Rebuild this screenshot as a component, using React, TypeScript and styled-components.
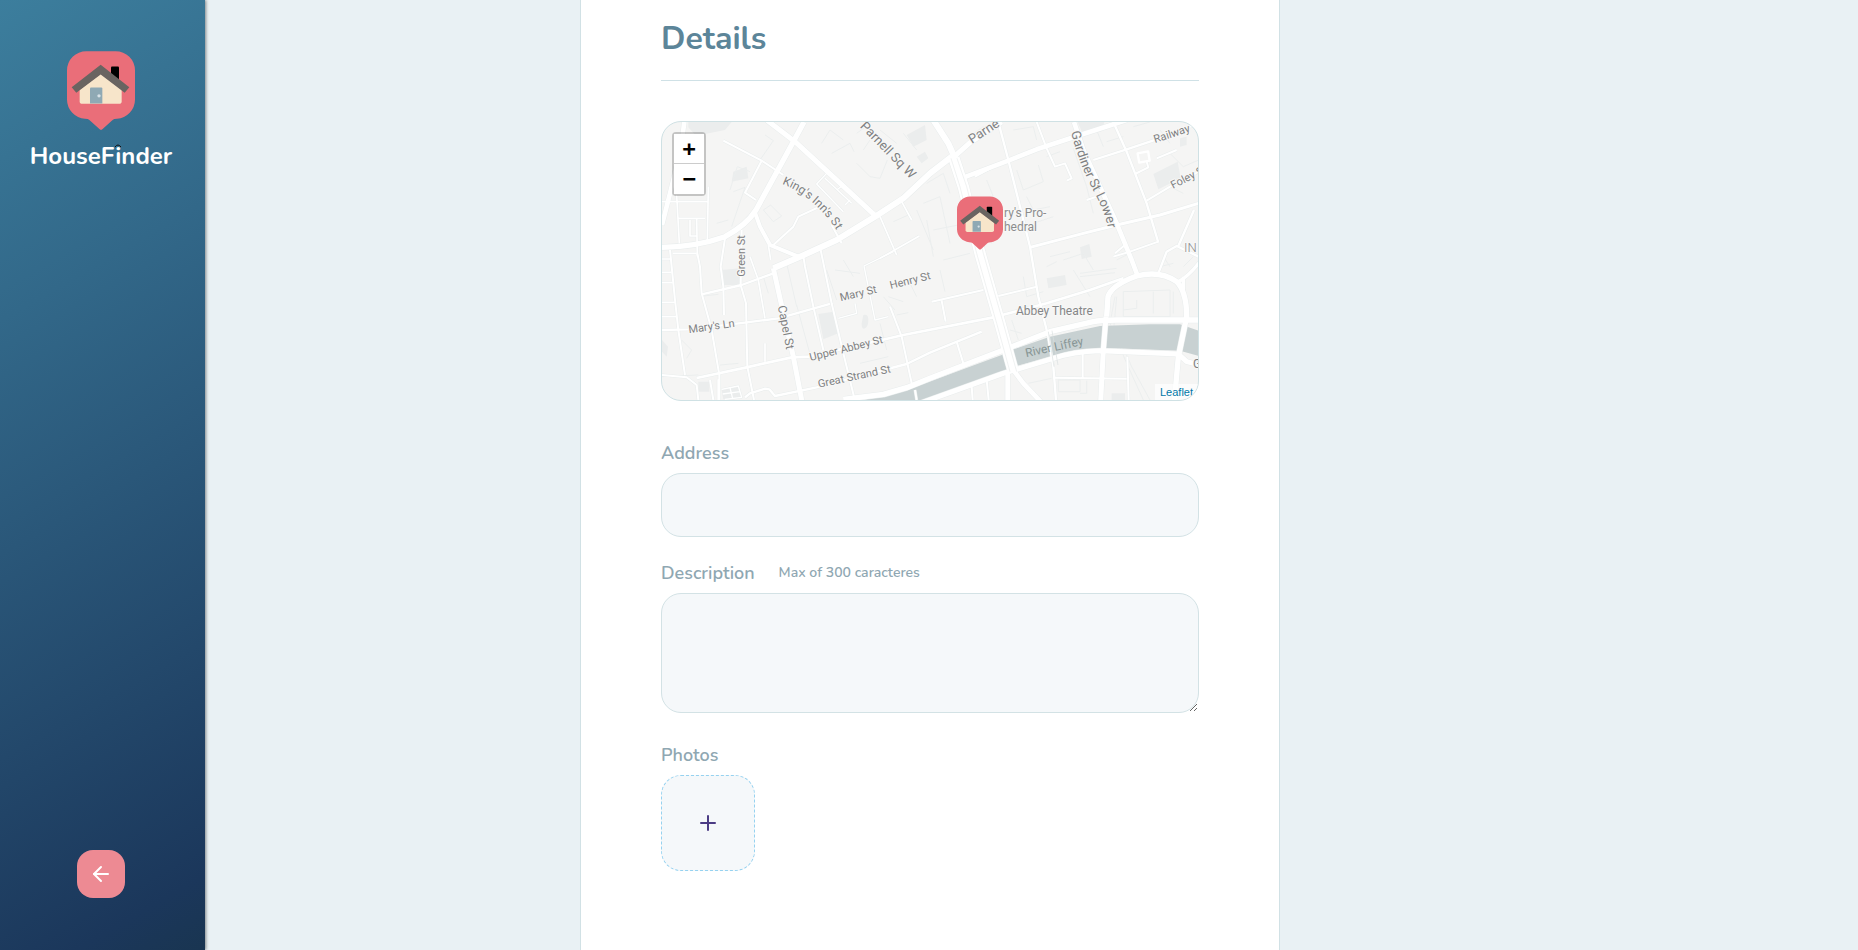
import React from "react";
import styled, { createGlobalStyle } from "styled-components";
import { ArrowLeft, Plus } from "lucide-react";

const GlobalStyle = createGlobalStyle`
  *, *::before, *::after { box-sizing: border-box; }
  body {
    margin: 0;
    background: #e9f1f4;
    font-family: Nunito, Lato, sans-serif;
    color: #8fa7b2;
  }
`;

const Page = styled.div`
  display: grid;
  grid-template-columns: 205px minmax(0, 1fr);
  min-height: 100vh;
`;

const Sidebar = styled.aside`
  display: flex;
  flex-direction: column;
  align-items: center;
  justify-content: space-between;
  padding: 51px 3px 52px 0;
  background: linear-gradient(150deg, #3c7e9d 0%, #326889 30%, #1b375b 93%, #193551 100%);
  box-shadow: 1px 0 3px rgba(0, 0, 0, 0.45);
`;

const Brand = styled.div`
  position: relative;
  display: flex;
  flex-direction: column;
  align-items: center;
  gap: 11px;
`;

const BrandName = styled.span`
  font-size: 24px;
  line-height: 30px;
  font-weight: 700;
  color: #fff;
`;

const Smoke = styled.svg`
  position: absolute;
  top: 93px;
  right: 51px;
`;

const BackButton = styled.button`
  display: grid;
  place-items: center;
  width: 48px;
  height: 48px;
  padding: 0;
  border: 0;
  border-radius: 16px;
  background: #ed8a93;
  color: #fff;
  cursor: pointer;
`;

const Main = styled.main`
  display: flex;
  justify-content: center;
  padding-right: 203px;
`;

const Form = styled.form`
  display: flex;
  flex-direction: column;
  width: 100%;
  max-width: 700px;
  padding: 20px 80px 79px;
  background: #fff;
  border: 1px solid #d1e1e5;
  border-width: 0 1px;
`;

const Title = styled.h2`
  margin: 0 0 40px;
  padding-bottom: 22px;
  border-bottom: 1px solid #cfe1e6;
  font-size: 32px;
  line-height: 38px;
  font-weight: 700;
  color: #5c8599;
`;

const MapFrame = styled.div`
  position: relative;
  height: 280px;
  margin-bottom: 40px;
  overflow: hidden;
  border: 1px solid #cfe1e4;
  border-radius: 20px;
  background: #f5f5f4;
`;

const MapCanvas = styled.svg`
  display: block;
  width: 100%;
  height: 100%;
`;

const ZoomControl = styled.div`
  position: absolute;
  top: 10px;
  left: 10px;
  display: flex;
  flex-direction: column;
  border: 2px solid rgba(0, 0, 0, 0.2);
  background-clip: padding-box;
  border-radius: 4px;
`;

const ZoomButton = styled.button`
  width: 30px;
  height: 30px;
  padding: 0;
  border: 0;
  background: #fff;
  color: #000;
  font: bold 22px/28px "DejaVu Sans Mono", monospace;
  cursor: pointer;

  &:first-child {
    border-bottom: 1px solid #ccc;
  }
`;

const Marker = styled.div`
  position: absolute;
  top: 74px;
  left: 295px;
  line-height: 0;
`;

const Attribution = styled.div`
  position: absolute;
  right: 0;
  bottom: 0;
  padding: 0 5px;
  background: rgba(255, 255, 255, 0.7);
  font: 11px/16px "Liberation Sans", sans-serif;

  a {
    color: #0078a8;
    text-decoration: none;
  }
`;

const Field = styled.div<{ $gap?: number }>`
  display: flex;
  flex-direction: column;
  gap: 8px;
  margin-bottom: ${(p) => p.$gap ?? 24}px;
`;

const Label = styled.label`
  display: flex;
  align-items: center;
  gap: 24px;
  font-size: 18px;
  line-height: 24px;
  font-weight: 600;
  color: #8fa7b2;
`;

const Hint = styled.span`
  font-size: 14px;
`;

const TextInput = styled.input`
  width: 100%;
  height: 64px;
  padding: 0 16px;
  border: 1px solid #d3e2e5;
  border-radius: 20px;
  outline: 0;
  background: #f5f8fa;
  color: #5c8599;
  font: inherit;
`;

const TextArea = styled.textarea`
  display: block;
  width: 100%;
  height: 120px;
  padding: 16px;
  border: 1px solid #d3e2e5;
  border-radius: 20px;
  outline: 0;
  resize: vertical;
  background: #f5f8fa;
  color: #5c8599;
  font: inherit;
`;

const PhotoButton = styled.button`
  display: grid;
  place-items: center;
  width: 94px;
  height: 96px;
  padding: 0;
  border: 1px dashed #96d2f0;
  border-radius: 20px;
  background: #f5f8fa;
  color: #4b3c84;
  cursor: pointer;
`;

function HousePin({ width, height }: { width: number; height: number }) {
  return (
    <svg width={width} height={height} viewBox="0 0 204 236" role="img" aria-label="House pin">
      <path
        d="M58 0h88a58 58 0 0 1 58 58v88a58 58 0 0 1-54 57q-10 0-14 4l-30 27q-4 3-8 0l-30-27q-4-4-14-4A58 58 0 0 1 0 146V58A58 58 0 0 1 58 0z"
        fill="#ea6e79"
      />
      <rect x="132" y="46" width="24" height="44" rx="3" fill="#000" />
      <path d="M101 68 164 116v34q0 8-8 8H46q-8 0-8-8v-34z" fill="#f7e5ca" />
      <path d="M69 112q0-3 3-3h31q3 0 3 3v45H69z" fill="#8fa9b4" />
      <circle cx="96" cy="134" r="5" fill="#d9e3e8" />
      <path d="M101 41 187 108 173 125 101 70 28 125 14 108z" fill="#696461" />
    </svg>
  );
}

type Road = [path: string, width: number];

const roads: Road[] = [
  ["M36 275H175M85 325H165M80 255 88 400M175 230 172 390M140 325 142 440M120 330V378H140", 5],
  ["M220 92 335 152 400 195M335 152 285 248 318 270M545 345 575 400", 6],
  ["M530 190 500 222 580 305M525 205 605 280M560 240 580 225M585 285 600 270", 4],
  ["M370 405 430 350 445 320 520 285", 6],
  ["M142 430 150 470 155 550 185 660 208 795V870", 6],
  ["M60 420 68 500 75 570 85 660 105 795", 6],
  ["M36 447H62M36 487H65M36 518H68M36 577H75M36 620H80M68 430H140", 5],
  ["M225 385 212 470 220 530 222 615", 6],
  ["M36 660 115 658 285 638 385 625 540 582", 7],
  ["M155 553 275 525 370 490", 7],
  ["M275 360 272 525 288 580 292 770 312 870", 6],
  ["M355 405 362 450M300 440 325 510 345 625M345 700V755", 5],
  ["M460 438 465 470 490 590 520 720", 6],
  ["M512 420 545 580 580 730 612 860", 6],
  ["M140 804 290 772 425 742 475 740 695 690 760 675 1030 622 1190 580 1320 540 1420 505", 8],
  ["M36 795 110 802 140 825 145 870M180 810 190 870M205 808V870", 6],
  ["M215 838 265 828 275 862 225 868M240 833 248 866M218 852 270 845", 4],
  ["M285 862 300 850 345 836 358 838 375 858 500 832 770 762 840 728 995 665", 7],
  ["M720 590 755 680 785 820M795 840 800 870", 6],
  ["M690 320 740 435M690 445 808 378M755 275 785 330", 5],
  ["M642 468 730 425M642 468 675 630 715 620M565 625 620 610 615 580", 4],
  ["M920 695 940 760M845 575 1000 540M875 572 887 635M1045 558 1160 530", 6],
  ["M975 200 1060 155M1160 36 1190 115 1215 170 1245 160 1265 205 1250 212", 6],
  ["M1045 36 1075 150 1140 410 1165 560 1195 680 1210 770 1218 870", 7],
  ["M1140 412 1300 370 1400 345 1530 315 1646 280", 9],
  ["M1390 36 1432 130 1490 280 1525 398", 7],
  ["M1330 150 1430 118 1520 88 1646 40", 7],
  ["M1490 272 1560 230 1646 185M1455 192 1495 172 1490 155M1310 270 1370 250M1520 145 1580 120", 6],
  ["M1525 395 1440 425 1390 440M1395 430 1425 405", 6],
  ["M1525 490 1550 425 1580 408 1646 440M1585 408 1632 300", 7],
  ["M1210 803 1430 806M1298 725V803M1432 740 1436 870M965 830 968 870M1010 810 1016 870", 6],
  ["M103 36 92 120 60 250 36 345", 14],
  ["M462 36 430 95 318 300Q290 345 225 380 140 410 36 412", 16],
  ["M350 30 435 95 675 316", 15],
  ["M370 475 455 438 560 390 675 320 760 265 840 190 905 140", 18],
  ["M315 308 330 350 360 405 445 440", 12],
  ["M370 475 400 610 430 740 456 875", 15],
  ["M850 30 895 100 915 145", 18],
  ["M910 142 960 98 1055 36", 15],
  ["M940 203 1075 152 1160 118 1300 72 1430 30", 14],
  ["M1272 36 1300 120 1400 340 1445 450 1462 495", 14],
  ["M1370 620 1374 560Q1385 525 1460 498 1530 480 1580 515 1610 545 1610 620L1585 740 1573 875", 16],
  ["M1585 515Q1615 500 1650 455M1600 560V500", 10],
  ["M1368 620 1360 720 1352 875", 15],
  ["M580 868 700 853 770 833 840 805 1055 722 1200 665 1330 635Q1350 630 1400 630H1650", 16],
  ["M810 880 1060 790 1210 745Q1270 724 1350 722L1585 732 1610 755 1650 765", 15],
  ["M1090 780 1120 820 1172 875M1073 780V875", 14],
  ["M912 145 940 230 990 430 1050 640 1090 785", 34],
];

const buildings = [
  "M115 36h130l-20 24-60 12-5 30-45-50z",
  "M770 75 825 45 830 90 790 110zM505 612 550 605 565 670 520 688z",
  "M1283 36h80l-8 28-55 12zM1510 192 1583 155 1592 205 1525 238z",
  "M1190 505 1245 495 1250 525 1195 535zM1290 412 1318 402 1325 440 1295 447z",
  "M215 480 270 475V525H215zM145 815H178V845H145zM215 840 265 830 275 860 220 868z",
  "M640 615q15-5 15 15t-10 25-10-15zM1385 850h40v20h-40zM800 140l25-15 10 20-20 15z",
  "M250 185 290 170 295 205 245 215zM1590 85l20-5v25l-20 5zM36 690l18 20-4 30-14-15z",
];

const outlines = [
  "M345 75 370 92 330 150M515 100 540 60 580 90M545 130 600 100 612 125M620 160 660 200 690 205 712 150",
  "M240 240 262 170 300 185M250 245 285 232 245 350M340 300 362 285 395 318 370 335zM200 340 235 330",
  "M690 60 740 100M760 70 800 120M620 70 650 48M640 120 660 90M730 335 775 315M800 300 850 420",
  "M410 460 440 590M440 585 482 740M530 480 560 570M580 450 610 500M555 480 630 490",
  "M700 560 735 600M780 520 800 560M715 560 760 575M740 615 775 608M690 640 710 720M630 760 715 740",
  "M95 690 125 720 110 745M210 765 265 760M340 500 355 550M36 800 145 795M160 558 205 553",
  "M1000 50 950 85M820 280 870 260 900 400M830 330 850 440M830 220 880 190 900 250M850 360 1000 330",
  "M1090 60 1150 50 1160 90M1100 180 1120 240 1180 215 1165 165M1190 140 1230 125M1270 115 1310 230 1330 310",
  "M1130 260 1150 300 1200 290M1150 340 1210 320M1240 450 1300 430 1330 480M1200 440 1260 425",
  "M1000 300 1025 400M1010 210 1030 260M1080 660 1115 670M1085 630 1105 690M1190 470 1220 455",
  "M1420 545 1560 540V620H1420zM1570 545V610M1420 600 1460 595 1460 570",
  "M1290 490 1400 475M1290 500 1395 488M1270 480 1320 560M1395 560 1380 640 1430 760 1480 870",
  "M1400 560 1392 650 1445 770 1500 870M1225 810H1290V845H1225zM1310 812V850H1290M1135 820 1205 805",
  "M1400 450 1480 410M1530 470 1570 460M1540 440 1560 470M1600 470 1630 440M1560 130 1600 170 1646 150",
  "M1340 60 1360 110M1370 95 1420 80M1450 50 1500 36M1530 60 1560 100M1560 230 1600 250",
  "M1180 545 1130 560 1120 500M870 480 885 545M995 440 985 480M880 450 960 430M1510 545V610",
];

const streetColor = "#7f8182";

function CityMap() {
  return (
    <MapCanvas viewBox="0 0 536 278" preserveAspectRatio="xMidYMid slice" role="img" aria-label="Map of Dublin">
      <g transform="scale(0.33333) translate(-36 -36)" fill="none" strokeLinejoin="round">
        {buildings.map((d) => (
          <path key={d} d={d} fill="#ebeded" />
        ))}
        {outlines.map((d) => (
          <path key={d} d={d} stroke="#ebeeee" strokeWidth={3} />
        ))}
        <path
          d="M640 870 750 845 825 820 1055 735 1090 718 1200 680 1350 648 1500 643H1590L1646 662V738L1590 722 1370 714 1260 724 1100 768 1060 785 850 868 840 872z"
          fill="#c8d1d2"
        />
        {roads.map(([d, w]) => (
          <path key={d} d={d} stroke="#e9eded" strokeWidth={w + 3} />
        ))}
        {roads.map(([d, w]) => (
          <path key={d} d={d} stroke="#ffffff" strokeWidth={w} />
        ))}
        <rect x="1465" y="127" width="32" height="28" stroke="#fff" strokeWidth={7} transform="rotate(-10 1481 141)" />
        <path d="M903 145 930 230 980 430 1040 640 1080 785M921 145 950 230 1000 430 1060 640 1100 785" stroke="#e8ecec" strokeWidth={2} />
        <path d="M1195 665 1212 770M1206 662 1224 765" stroke="#d9dfdf" strokeWidth={2} />
      </g>
      <defs>
        <path id="kings-inns" d="M120 62Q148 72 172 104L184 124" />
        <path id="gardiner" d="M409 10Q417 42 431 68T446 108L450 122" />
      </defs>
      <g
        fontFamily="Roboto, sans-serif"
        fontSize="12"
        fill={streetColor}
        stroke="#f8f8f7"
        strokeWidth="2"
        paintOrder="stroke"
        strokeLinejoin="round"
      >
        <text fontSize="13" textAnchor="middle" transform="translate(223 31) rotate(46)">Parnell Sq W</text>
        <text><textPath href="#kings-inns">King's Inn's St</textPath></text>
        <text fontSize="11" textAnchor="middle" transform="translate(83 134) rotate(-90)">Green St</text>
        <text textAnchor="middle" transform="translate(120 206) rotate(79)">Capel St</text>
        <text fontSize="11" textAnchor="middle" transform="translate(50 208) rotate(-8)">Mary's Ln</text>
        <text fontSize="11" textAnchor="middle" transform="translate(197 175) rotate(-13)">Mary St</text>
        <text fontSize="11" textAnchor="middle" transform="translate(249 162) rotate(-14)">Henry St</text>
        <text fontSize="11" textAnchor="middle" transform="translate(185 230) rotate(-14)">Upper Abbey St</text>
        <text fontSize="11" textAnchor="middle" transform="translate(193 258) rotate(-12)">Great Strand St</text>
        <text fontSize="13" transform="translate(310 22) rotate(-33)">Parne</text>
        <text fontSize="13"><textPath href="#gardiner">Gardiner St Lower</textPath></text>
        <text fontSize="11" transform="translate(493 21) rotate(-18)">Railway</text>
        <text fontSize="11" transform="translate(511 67) rotate(-27)">Foley St</text>
        <text fill="#8c8d8e" x="342" y="95">ry's Pro-</text>
        <text fill="#8c8d8e" x="342" y="109">hedral</text>
        <text fill="#858687" x="354" y="193">Abbey Theatre</text>
        <text fontSize="13" fontWeight="300" fill="#8b8d8e" x="522" y="130">IN</text>
        <text x="531" y="246">G</text>
        <text textAnchor="middle" fill="#879595" stroke="none" transform="translate(393 229) rotate(-12)">River Liffey</text>
      </g>
    </MapCanvas>
  );
}

export default function App() {
  return (
    <>
      <GlobalStyle />
      <Page>
        <Sidebar>
          <Brand>
            <HousePin width={68} height={79} />
            <BrandName>HouseFinder</BrandName>
            <Smoke width="6" height="4" viewBox="0 0 6 4" aria-hidden="true">
              <path d="M0 3Q3-1 6 3" fill="none" stroke="#111" />
            </Smoke>
          </Brand>
          <BackButton type="button" aria-label="Go back">
            <ArrowLeft size={24} />
          </BackButton>
        </Sidebar>
        <Main>
          <Form>
            <Title>Details</Title>
            <MapFrame>
              <CityMap />
              <Marker>
                <HousePin width={46} height={54} />
              </Marker>
              <ZoomControl>
                <ZoomButton type="button" aria-label="Zoom in">+</ZoomButton>
                <ZoomButton type="button" aria-label="Zoom out">−</ZoomButton>
              </ZoomControl>
              <Attribution>
                <a href="#leaflet">Leaflet</a>
              </Attribution>
            </MapFrame>
            <Field>
              <Label htmlFor="address">Address</Label>
              <TextInput id="address" type="text" />
            </Field>
            <Field $gap={30}>
              <Label htmlFor="description">
                Description <Hint>Max of 300 caracteres</Hint>
              </Label>
              <TextArea id="description" maxLength={300} />
            </Field>
            <Field $gap={0}>
              <Label htmlFor="photos">Photos</Label>
              <PhotoButton id="photos" type="button" aria-label="Add photo">
                <Plus size={24} />
              </PhotoButton>
            </Field>
          </Form>
        </Main>
      </Page>
    </>
  );
}
